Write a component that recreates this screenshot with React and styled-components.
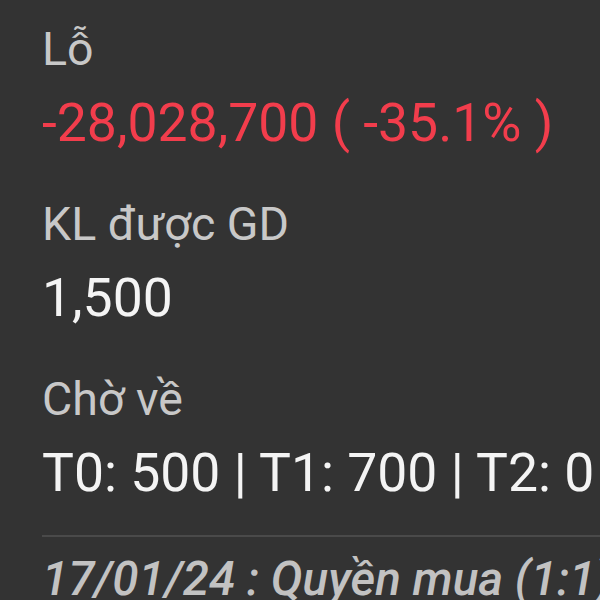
import React from 'react';
import styled, { createGlobalStyle } from 'styled-components';

const GlobalStyle = createGlobalStyle`
  html, body {
    margin: 0;
    padding: 0;
    background: #333333;
    overflow: hidden;
  }
`;

const Screen = styled.div`
  width: 600px;
  height: 600px;
  overflow: hidden;
  box-sizing: border-box;
  padding: 19px 0 0 42px;
  background: #333333;
  font-family: Roboto, "Noto Sans", sans-serif;
  white-space: nowrap;
`;

const Field = styled.div`
  display: flex;
  flex-direction: column;
  gap: 14px;
  margin-bottom: 41px;
`;

const Label = styled.div`
  font-size: 46.5px;
  line-height: 60px;
  color: #c8c8c8;
`;

const Value = styled.div`
  font-size: 53.5px;
  line-height: 60px;
  color: ${props => (props.down ? '#f23d4c' : '#f4f4f4')};
`;

const Divider = styled.div`
  height: 2px;
  background: #4a4a4a;
  margin: -9px 0 14px;
`;

const Event = styled.div`
  font-size: 47.5px;
  line-height: 56px;
  font-style: italic;
  font-weight: 500;
  color: #c2c2c2;
`;

export default function App() {
  return (
    <Screen>
      <GlobalStyle />
      <Field>
        <Label>Lỗ</Label>
        <Value down>-28,028,700 ( -35.1% )</Value>
      </Field>
      <Field>
        <Label>KL được GD</Label>
        <Value>1,500</Value>
      </Field>
      <Field>
        <Label>Chờ về</Label>
        <Value>T0: 500 | T1: 700 | T2: 0</Value>
      </Field>
      <Divider />
      <Event>17/01/24 : Quyền mua (1:1)</Event>
    </Screen>
  );
}
